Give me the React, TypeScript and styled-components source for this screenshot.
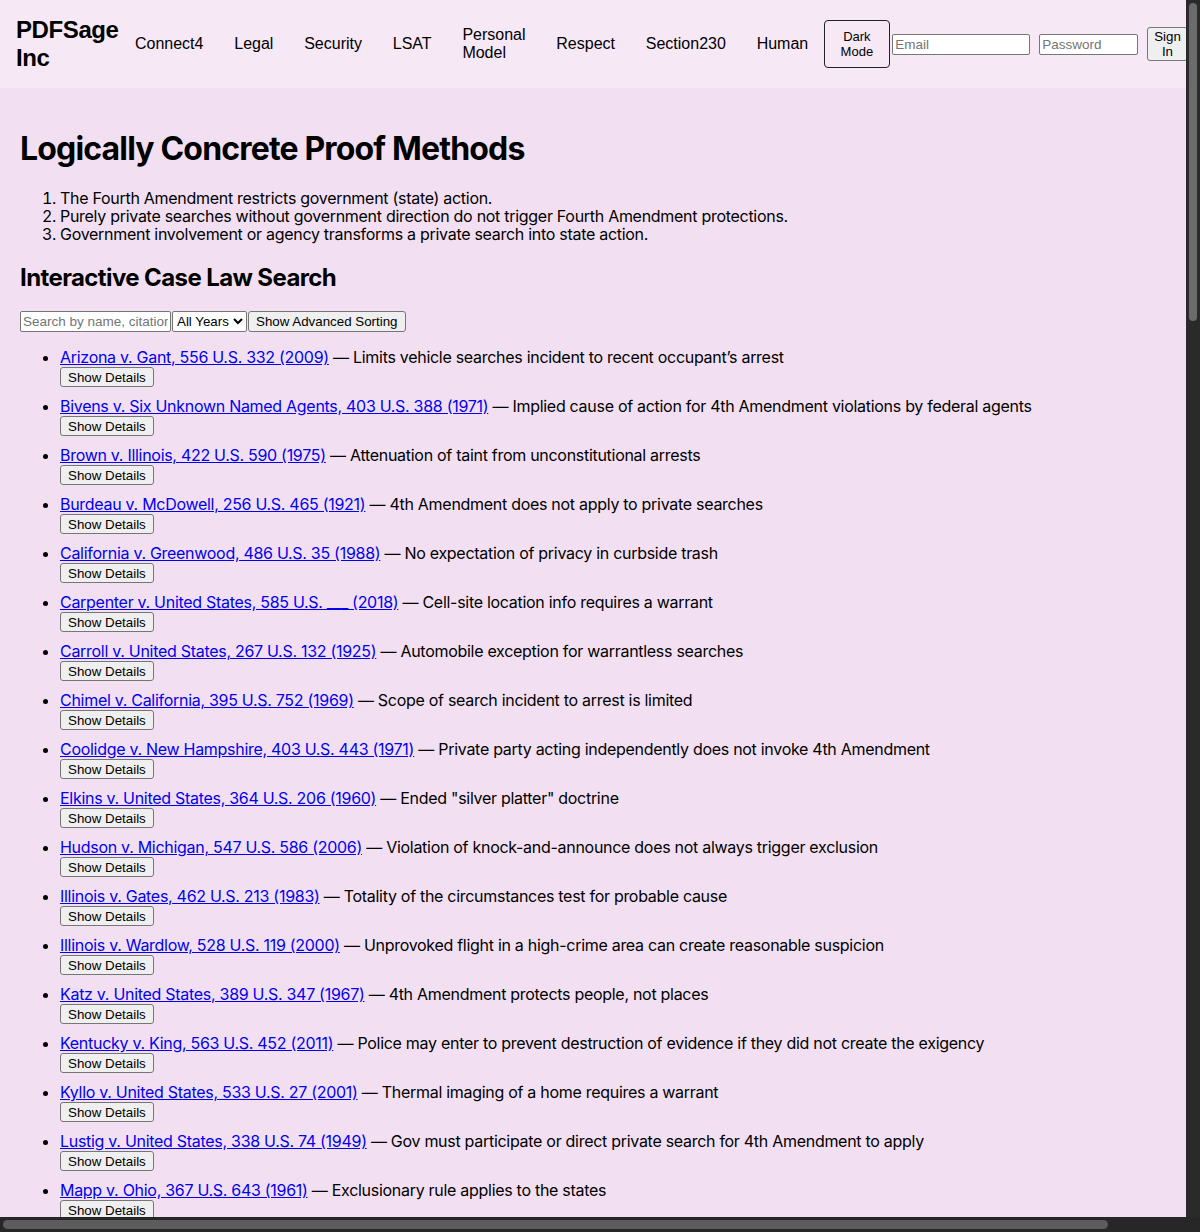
import React, { useLayoutEffect, useRef, useState } from "react";
import styled, { createGlobalStyle } from "styled-components";

const GlobalStyle = createGlobalStyle`
  html, body {
    margin: 0;
    background: #f2e0f2;
    color: #000;
    font-family: Inter, "Noto Sans", sans-serif;
    overflow: hidden;
  }
`;

const Frame = styled.div`
  display: grid;
  grid-template-columns: minmax(0, 1fr) 14px;
  grid-template-rows: minmax(0, 1fr) 15px;
  height: 100vh;
  background: #282828;
`;

const Viewport = styled.div`
  overflow: auto;
  background: #f2e0f2;
  scrollbar-width: none;
  &::-webkit-scrollbar {
    display: none;
  }
`;

const VTrack = styled.div`
  background: #2a2a2a;
  padding: 3px;
`;

const VThumb = styled.div`
  width: 8px;
  border-radius: 4px;
  background: #6b6b6b;
`;

const HTrack = styled.div`
  display: flex;
  align-items: center;
  background: #272727;
  padding: 0 3px;
`;

const HThumb = styled.div`
  height: 9px;
  border-radius: 4.5px;
  background: #5c5c5c;
`;

const Corner = styled.div`
  background: #272727;
`;

const Header = styled.header`
  display: flex;
  align-items: center;
  padding: 16px;
  background: #f6e8f5;
  font-family: "Liberation Sans", Arial, sans-serif;
`;

const Logo = styled.div`
  flex-shrink: 0;
  width: min-content;
  font-size: 24px;
  font-weight: 700;
  line-height: 28px;
  letter-spacing: -0.4px;
  margin-right: 1px;
`;

const Nav = styled.nav`
  display: flex;
  align-items: center;
  flex-shrink: 0;
`;

const NavLink = styled.a`
  display: block;
  width: min-content;
  padding: 0 15.4px;
  font-size: 16px;
  line-height: 18px;
  color: #000;
  text-decoration: none;
  cursor: pointer;
`;

const OutlineButton = styled.button`
  flex-shrink: 0;
  width: min-content;
  padding: 8px 16px;
  border: 1px solid #222;
  border-radius: 4px;
  background: transparent;
  color: #000;
  font-family: "Liberation Sans", Arial, sans-serif;
  font-size: 13px;
  line-height: 15px;
`;

const AuthForm = styled.form`
  display: flex;
  align-items: center;
  gap: 9px;
  margin-left: 2px;
  padding-right: 28px;
  flex-shrink: 0;
`;

const TextInput = styled.input<{ $w: number }>`
  box-sizing: border-box;
  width: ${(p) => p.$w}px;
  height: 21px;
  padding: 1px 2px;
  border: 1px solid #767676;
  border-radius: 2px;
  background: #fff;
  font-family: "Liberation Sans", Arial, sans-serif;
  font-size: 13.5px;
  &::placeholder {
    color: #757575;
  }
`;

const NativeButton = styled.button<{ $narrow?: boolean }>`
  flex-shrink: 0;
  width: ${(p) => (p.$narrow ? "min-content" : "auto")};
  padding: 1px 6px;
  border: 1px solid #767676;
  border-radius: 3px;
  background: #efefef;
  color: #000;
  font-family: "Liberation Sans", Arial, sans-serif;
  font-size: 13.33px;
  line-height: 15px;
`;

const Main = styled.main`
  padding: 20px;
`;

const Title = styled.h1`
  font-size: 32px;
  font-weight: 700;
  letter-spacing: -0.026em;
  margin: 21px 0;
`;

const Principles = styled.ol`
  margin: 0;
  padding-left: 40px;
  font-size: 16px;
  line-height: 18px;
  letter-spacing: -0.018em;
`;

const SectionTitle = styled.h2`
  font-size: 24px;
  font-weight: 700;
  letter-spacing: -0.025em;
  margin: 20px 0 19px;
  line-height: 29px;
`;

const SearchRow = styled.div`
  display: flex;
  align-items: center;
`;

const Select = styled.select`
  box-sizing: border-box;
  height: 21px;
  width: 75px;
  border: 1px solid #767676;
  border-radius: 2px;
  background: #fff;
  color: #000;
  font-family: "Liberation Sans", Arial, sans-serif;
  font-size: 13.33px;
  margin: 0 1px;
`;

const SortButton = styled(NativeButton)`
  height: 21px;
  padding: 1px 7px;
`;

const CaseList = styled.ul`
  margin: 16px 0 0;
  padding-left: 40px;
  font-size: 16px;
  letter-spacing: -0.018em;
`;

const CaseItem = styled.li`
  margin-bottom: 10px;
  line-height: 19px;
`;

const CaseLink = styled.a`
  color: #0000ee;
  text-decoration: underline;
`;

const DetailsButton = styled(NativeButton)`
  display: block;
  height: 20px;
  padding: 1px 7px;
  letter-spacing: 0;
`;

type Case = { name: string; note: string };

const cases: Case[] = [
  { name: "Arizona v. Gant, 556 U.S. 332 (2009)", note: "Limits vehicle searches incident to recent occupant’s arrest" },
  { name: "Bivens v. Six Unknown Named Agents, 403 U.S. 388 (1971)", note: "Implied cause of action for 4th Amendment violations by federal agents" },
  { name: "Brown v. Illinois, 422 U.S. 590 (1975)", note: "Attenuation of taint from unconstitutional arrests" },
  { name: "Burdeau v. McDowell, 256 U.S. 465 (1921)", note: "4th Amendment does not apply to private searches" },
  { name: "California v. Greenwood, 486 U.S. 35 (1988)", note: "No expectation of privacy in curbside trash" },
  { name: "Carpenter v. United States, 585 U.S. ___ (2018)", note: "Cell-site location info requires a warrant" },
  { name: "Carroll v. United States, 267 U.S. 132 (1925)", note: "Automobile exception for warrantless searches" },
  { name: "Chimel v. California, 395 U.S. 752 (1969)", note: "Scope of search incident to arrest is limited" },
  { name: "Coolidge v. New Hampshire, 403 U.S. 443 (1971)", note: "Private party acting independently does not invoke 4th Amendment" },
  { name: "Elkins v. United States, 364 U.S. 206 (1960)", note: "Ended \"silver platter\" doctrine" },
  { name: "Hudson v. Michigan, 547 U.S. 586 (2006)", note: "Violation of knock-and-announce does not always trigger exclusion" },
  { name: "Illinois v. Gates, 462 U.S. 213 (1983)", note: "Totality of the circumstances test for probable cause" },
  { name: "Illinois v. Wardlow, 528 U.S. 119 (2000)", note: "Unprovoked flight in a high-crime area can create reasonable suspicion" },
  { name: "Katz v. United States, 389 U.S. 347 (1967)", note: "4th Amendment protects people, not places" },
  { name: "Kentucky v. King, 563 U.S. 452 (2011)", note: "Police may enter to prevent destruction of evidence if they did not create the exigency" },
  { name: "Kyllo v. United States, 533 U.S. 27 (2001)", note: "Thermal imaging of a home requires a warrant" },
  { name: "Lustig v. United States, 338 U.S. 74 (1949)", note: "Gov must participate or direct private search for 4th Amendment to apply" },
  { name: "Mapp v. Ohio, 367 U.S. 643 (1961)", note: "Exclusionary rule applies to the states" },
  { name: "Marron v. United States, 275 U.S. 192 (1927)", note: "Warrant must particularly describe the things to be seized" },
  { name: "Maryland v. Buie, 494 U.S. 325 (1990)", note: "Protective sweep permitted during an in-home arrest" },
  { name: "Maryland v. Garrison, 480 U.S. 79 (1987)", note: "Reasonable mistakes in executing a warrant" },
  { name: "Maryland v. King, 569 U.S. 435 (2013)", note: "DNA swab of arrestees is a reasonable search" },
  { name: "Maryland v. Pringle, 540 U.S. 366 (2003)", note: "Probable cause to arrest all occupants of a car" },
  { name: "Maryland v. Wilson, 519 U.S. 408 (1997)", note: "Officers may order passengers out of a stopped car" },
  { name: "Michigan v. Long, 463 U.S. 1032 (1983)", note: "Protective search of a vehicle passenger compartment" },
  { name: "Michigan v. Summers, 452 U.S. 692 (1981)", note: "Detention of occupants during execution of a search warrant" },
  { name: "Michigan v. Tyler, 436 U.S. 499 (1978)", note: "Warrant required for fire investigations after the emergency ends" },
  { name: "Michigan Dept. of State Police v. Sitz, 496 U.S. 444 (1990)", note: "Sobriety checkpoints are constitutional" },
  { name: "Mincey v. Arizona, 437 U.S. 385 (1978)", note: "No \"murder scene\" exception to the warrant requirement" },
  { name: "Minnesota v. Carter, 525 U.S. 83 (1998)", note: "Short-term business visitors lack an expectation of privacy" },
  { name: "Minnesota v. Dickerson, 508 U.S. 366 (1993)", note: "Plain-feel doctrine during a lawful frisk" },
  { name: "Minnesota v. Olson, 495 U.S. 91 (1990)", note: "Overnight guests have an expectation of privacy" },
  { name: "Missouri v. McNeely, 569 U.S. 141 (2013)", note: "Dissipation of alcohol is not a per se exigency" },
  { name: "Murray v. United States, 487 U.S. 533 (1988)", note: "Independent source doctrine" },
  { name: "New Jersey v. T.L.O., 469 U.S. 325 (1985)", note: "Reasonable suspicion standard for school searches" },
  { name: "New York v. Belton, 453 U.S. 454 (1981)", note: "Search of passenger compartment incident to arrest" },
  { name: "New York v. Burger, 482 U.S. 691 (1987)", note: "Administrative searches of closely regulated businesses" },
  { name: "Nix v. Williams, 467 U.S. 431 (1984)", note: "Inevitable discovery exception" },
  { name: "Ohio v. Robinette, 519 U.S. 33 (1996)", note: "No requirement to inform a detainee that they are free to go" },
  { name: "Oliver v. United States, 466 U.S. 170 (1984)", note: "Open fields doctrine" },
  { name: "Olmstead v. United States, 277 U.S. 438 (1928)", note: "Wiretapping not a search (later overruled)" },
  { name: "Payton v. New York, 445 U.S. 573 (1980)", note: "Warrant required for a routine home arrest" },
  { name: "Pennsylvania v. Mimms, 434 U.S. 106 (1977)", note: "Officers may order the driver out of a stopped car" },
  { name: "Rakas v. Illinois, 439 U.S. 128 (1978)", note: "Standing requires a personal expectation of privacy" },
  { name: "Rawlings v. Kentucky, 448 U.S. 98 (1980)", note: "Ownership of seized items does not confer standing" },
  { name: "Riley v. California, 573 U.S. 373 (2014)", note: "Warrant generally required to search a cell phone" },
  { name: "Rodriguez v. United States, 575 U.S. 348 (2015)", note: "Traffic stop cannot be prolonged for a dog sniff" },
  { name: "Schmerber v. California, 384 U.S. 757 (1966)", note: "Warrantless blood draw under exigent circumstances" },
  { name: "Schneckloth v. Bustamonte, 412 U.S. 218 (1973)", note: "Voluntariness of consent judged by the totality of circumstances" },
  { name: "Segura v. United States, 468 U.S. 796 (1984)", note: "Securing premises while a warrant is obtained" },
  { name: "See v. City of Seattle, 387 U.S. 541 (1967)", note: "Administrative inspections of businesses require warrants" },
  { name: "Silverman v. United States, 365 U.S. 505 (1961)", note: "Physical intrusion with a spike mike is a search" },
  { name: "Silverthorne Lumber Co. v. United States, 251 U.S. 385 (1920)", note: "Origins of the fruit of the poisonous tree doctrine" },
  { name: "Skinner v. Railway Labor Executives' Assn., 489 U.S. 602 (1989)", note: "Drug testing of railroad employees" },
  { name: "Smith v. Maryland, 442 U.S. 735 (1979)", note: "No expectation of privacy in dialed phone numbers" },
  { name: "South Dakota v. Opperman, 428 U.S. 364 (1976)", note: "Inventory searches of impounded vehicles" },
  { name: "Spinelli v. United States, 393 U.S. 410 (1969)", note: "Informant tips and probable cause" },
  { name: "Stanford v. Texas, 379 U.S. 476 (1965)", note: "General warrants prohibited" },
  { name: "Steagald v. United States, 451 U.S. 204 (1981)", note: "Search warrant needed to enter a third party's home" },
  { name: "Tennessee v. Garner, 471 U.S. 1 (1985)", note: "Deadly force against fleeing suspects is limited" },
  { name: "Terry v. Ohio, 392 U.S. 1 (1968)", note: "Stop and frisk on reasonable suspicion" },
  { name: "United States v. Arvizu, 534 U.S. 266 (2002)", note: "Totality of circumstances for reasonable suspicion" },
  { name: "United States v. Drayton, 536 U.S. 194 (2002)", note: "Bus sweeps and voluntary consent" },
  { name: "United States v. Jacobsen, 466 U.S. 109 (1984)", note: "Government search limited to the scope of a prior private search" },
  { name: "United States v. Jones, 565 U.S. 400 (2012)", note: "GPS tracker on a vehicle is a search" },
  { name: "United States v. Knotts, 460 U.S. 276 (1983)", note: "Beeper monitoring on public roads is not a search" },
  { name: "United States v. Leon, 468 U.S. 897 (1984)", note: "Good-faith exception to the exclusionary rule" },
  { name: "United States v. Martinez-Fuerte, 428 U.S. 543 (1976)", note: "Fixed border checkpoints permitted" },
  { name: "United States v. Matlock, 415 U.S. 164 (1974)", note: "Third-party consent by a co-occupant" },
  { name: "United States v. Miller, 425 U.S. 435 (1976)", note: "No expectation of privacy in bank records" },
  { name: "United States v. Place, 462 U.S. 696 (1983)", note: "Canine sniff of luggage is not a search" },
  { name: "United States v. Robinson, 414 U.S. 218 (1973)", note: "Full search incident to a custodial arrest" },
  { name: "United States v. Ross, 456 U.S. 798 (1982)", note: "Automobile exception extends to containers" },
  { name: "United States v. Sokolow, 490 U.S. 1 (1989)", note: "Drug courier profile and reasonable suspicion" },
  { name: "United States v. Watson, 423 U.S. 411 (1976)", note: "Warrantless public arrest on probable cause" },
  { name: "Utah v. Strieff, 579 U.S. 232 (2016)", note: "Discovery of a valid warrant attenuates the taint" },
  { name: "Vernonia School District 47J v. Acton, 515 U.S. 646 (1995)", note: "Drug testing of student athletes" },
  { name: "Walter v. United States, 447 U.S. 649 (1980)", note: "Government viewing exceeded the private search" },
  { name: "Weeks v. United States, 232 U.S. 383 (1914)", note: "Exclusionary rule for federal courts" },
  { name: "Welsh v. Wisconsin, 466 U.S. 740 (1984)", note: "Gravity of the offense matters for exigency" },
  { name: "Whren v. United States, 517 U.S. 806 (1996)", note: "Pretextual traffic stops are permissible" },
  { name: "Wilson v. Arkansas, 514 U.S. 927 (1995)", note: "Knock-and-announce is part of reasonableness" },
  { name: "Wolf v. Colorado, 338 U.S. 25 (1949)", note: "4th Amendment applies to the states (without exclusion)" },
  { name: "Wong Sun v. United States, 371 U.S. 471 (1963)", note: "Fruit of the poisonous tree" },
  { name: "Wyoming v. Houghton, 526 U.S. 295 (1999)", note: "Search of passenger belongings in a car" },
  { name: "Ybarra v. Illinois, 444 U.S. 85 (1979)", note: "Presence at a searched location is not enough for a frisk" },
  { name: "Zurcher v. Stanford Daily, 436 U.S. 547 (1978)", note: "Search warrants for third-party premises" },
];

const navItems = ["Connect4", "Legal", "Security", "LSAT", "Personal Model", "Respect", "Section230", "Human"];

type Thumbs = { v: number; h: number };

export default function App() {
  const viewportRef = useRef<HTMLDivElement>(null);
  const [thumbs, setThumbs] = useState<Thumbs>({ v: 312, h: 1105 });

  useLayoutEffect(() => {
    const el = viewportRef.current;
    if (!el) return;
    const measure = () => {
      const vTrack = el.clientHeight - 6;
      const hTrack = el.clientWidth - 6;
      setThumbs({
        v: Math.max(20, (vTrack * el.clientHeight) / el.scrollHeight),
        h: Math.max(20, (hTrack * el.clientWidth) / el.scrollWidth),
      });
    };
    measure();
    window.addEventListener("resize", measure);
    return () => window.removeEventListener("resize", measure);
  }, []);

  return (
    <>
      <GlobalStyle />
      <Frame>
        <Viewport ref={viewportRef}>
          <Header>
            <Logo>PDFSage Inc</Logo>
            <Nav>
              {navItems.map((n) => (
                <NavLink key={n}>{n}</NavLink>
              ))}
            </Nav>
            <OutlineButton type="button">Dark Mode</OutlineButton>
            <AuthForm onSubmit={(e) => e.preventDefault()}>
              <TextInput $w={138} type="email" placeholder="Email" />
              <TextInput $w={99} type="password" placeholder="Password" />
              <NativeButton $narrow type="submit">Sign In</NativeButton>
              <NativeButton $narrow type="button">Sign Up</NativeButton>
            </AuthForm>
          </Header>
          <Main>
            <Title>Logically Concrete Proof Methods</Title>
            <Principles>
              <li>The Fourth Amendment restricts government (state) action.</li>
              <li>Purely private searches without government direction do not trigger Fourth Amendment protections.</li>
              <li>Government involvement or agency transforms a private search into state action.</li>
            </Principles>
            <SectionTitle>Interactive Case Law Search</SectionTitle>
            <SearchRow>
              <TextInput $w={151} type="text" placeholder="Search by name, citation, or keyword" />
              <Select defaultValue="all">
                <option value="all">All Years</option>
                <option value="1900">1900s</option>
                <option value="2000">2000s</option>
              </Select>
              <SortButton type="button">Show Advanced Sorting</SortButton>
            </SearchRow>
            <CaseList>
              {cases.map((c) => (
                <CaseItem key={c.name}>
                  <CaseLink href="#">{c.name}</CaseLink> — {c.note}
                  <DetailsButton type="button">Show Details</DetailsButton>
                </CaseItem>
              ))}
            </CaseList>
          </Main>
        </Viewport>
        <VTrack>
          <VThumb style={{ height: thumbs.v }} />
        </VTrack>
        <HTrack>
          <HThumb style={{ width: thumbs.h }} />
        </HTrack>
        <Corner />
      </Frame>
    </>
  );
}
